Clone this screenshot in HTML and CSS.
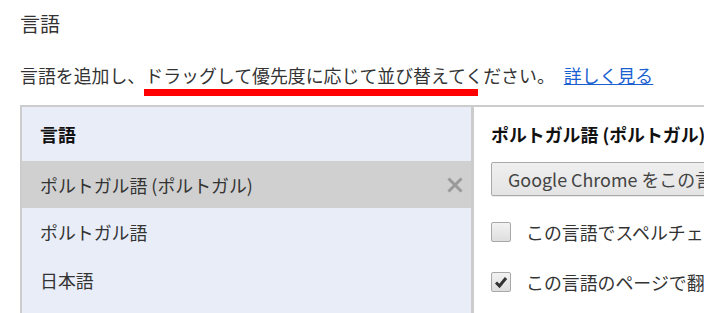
FILE: index.html
```html
<!DOCTYPE html>
<html lang="ja">
<head>
    <meta charset="UTF-8">
    <meta name="viewport" content="width=device-width, initial-scale=1.0">
    <title>言語</title>
    <link rel="stylesheet" href="styles.css">
</head>
<body>
    <h1 class="title">言語</h1>

    <p class="intro">
        言語を追加し、<span class="marked">ドラッグして優先度に応じて並び替えてください。</span> <a href="#">詳しく見る</a>
        <span class="annotation"></span>
    </p>

    <section class="panel">
        <div class="lang-list">
            <div class="lang-head">言語</div>
            <div class="lang-row selected">
                <span>ポルトガル語 (ポルトガル)</span>
                <svg class="remove" width="16" height="16" viewBox="0 0 16 16">
                    <path d="M2.5 2.5 L13.5 13.5 M13.5 2.5 L2.5 13.5" stroke="#9a9a9a" stroke-width="3" stroke-linecap="square"/>
                </svg>
            </div>
            <div class="lang-row">ポルトガル語</div>
            <div class="lang-row">日本語</div>
        </div>

        <div class="lang-detail">
            <h3>ポルトガル語 (ポルトガル)</h3>
            <button class="ui-button">Google Chrome をこの言語で表示</button>
            <label class="check-row">
                <span class="box"></span>
                この言語でスペルチェックを行う
            </label>
            <label class="check-row">
                <span class="box checked">
                    <svg width="14" height="14" viewBox="0 0 14 14">
                        <path d="M2 7.5 L5.5 11 L12 3" fill="none" stroke="#333" stroke-width="3"/>
                    </svg>
                </span>
                この言語のページで翻訳ツールを表示する
            </label>
        </div>
    </section>
</body>
</html>
```

FILE: styles.css
```css
body {
    margin: 0;
    padding: 0;
    background: #ffffff;
    color: #333333;
    font-family: "Noto Sans CJK JP", "Open Sans", sans-serif;
    overflow: hidden;
    width: 704px;
    height: 313px;
}
.title {
    font-size: 20px;
    font-weight: normal;
    line-height: 24px;
    margin: 0;
    padding: 12px 0 0 20px;
}
.intro {
    position: relative;
    font-size: 17.9px;
    line-height: 24px;
    margin: 27px 0 0 0;
    padding-left: 20px;
    white-space: nowrap;
}
.intro a {
    color: #1a5fd0;
    text-decoration: underline;
    margin-left: 5px;
}
.annotation {
    position: absolute;
    left: 144px;
    top: 26px;
    width: 334px;
    height: 7px;
    background: #ff0000;
}
.panel {
    display: flex;
    margin: 18px 0 0 20px;
    border-top: 2px solid #cccccc;
    border-left: 2px solid #cccccc;
    height: 206px;
}
.lang-list {
    width: 449px;
    flex-shrink: 0;
    background: #e9edf8;
    border-right: 3px solid #cccccc;
}
.lang-head {
    height: 54px;
    display: flex;
    align-items: center;
    padding-left: 18px;
    font-size: 17.9px;
    font-weight: bold;
    color: #111111;
}
.lang-row {
    height: 48px;
    display: flex;
    align-items: center;
    justify-content: space-between;
    padding: 0 8px 0 18px;
    font-size: 17.9px;
}
.lang-row.selected {
    height: 47px;
    background: #d0d0d0;
}
.lang-detail {
    flex: 1;
    padding: 15px 0 0 17px;
    background: #ffffff;
    white-space: nowrap;
    overflow: hidden;
}
.lang-detail h3 {
    margin: 0 0 16px 0;
    font-size: 17.9px;
    line-height: 24px;
    font-weight: bold;
    color: #111111;
}
.ui-button {
    display: block;
    height: 34px;
    width: 260px;
    padding: 0 0 0 16px;
    text-align: left;
    font-family: "Noto Sans CJK JP", "Open Sans", sans-serif;
    font-size: 17.9px;
    color: #444444;
    background: linear-gradient(#efefef, #e4e4e4);
    border: 1px solid #a9a9a9;
    border-radius: 2px;
    box-shadow: 0 1px 0 rgba(0, 0, 0, 0.08);
    margin-bottom: 11px;
    white-space: nowrap;
}
.check-row {
    height: 50px;
    display: flex;
    align-items: center;
    gap: 15px;
    font-size: 17.9px;
}
.box {
    width: 18px;
    height: 18px;
    border: 1px solid #a8a8a8;
    border-radius: 2px;
    background: linear-gradient(#f2f2f2, #dedede);
    display: flex;
    align-items: center;
    justify-content: center;
    flex-shrink: 0;
}
```
